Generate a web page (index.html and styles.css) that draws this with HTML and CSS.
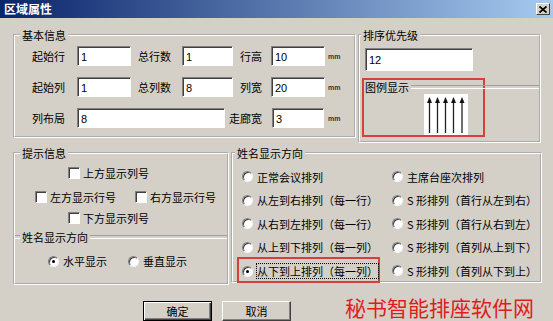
FILE: index.html
```html
<!DOCTYPE html>
<html lang="zh-CN">
<head>
    <meta charset="UTF-8">
    <title>区域属性</title>
    <link rel="stylesheet" href="styles.css">
</head>
<body>
    <div class="titlebar">
        <span class="title">区域属性</span>
        <span class="closeBtn">
            <svg width="8" height="7" viewBox="0 0 8 7"><path d="M0.5 0.5L7.5 6.5M7.5 0.5L0.5 6.5" stroke="#000" stroke-width="1.7"/></svg>
        </span>
    </div>
    <div class="dialog">
        <div class="topRow">
            <fieldset class="group basicGroup">
                <legend>基本信息</legend>
                <div class="basicGrid">
                    <label>起始行</label>
                    <input class="field w54" type="text" value="1">
                    <label>总行数</label>
                    <input class="field w51" type="text" value="1">
                    <label class="rightLabel">行高</label>
                    <input class="field w54" type="text" value="10">
                    <span class="unit">mm</span>

                    <label>起始列</label>
                    <input class="field w54" type="text" value="1">
                    <label>总列数</label>
                    <input class="field w51" type="text" value="8">
                    <label class="rightLabel">列宽</label>
                    <input class="field w54" type="text" value="20">
                    <span class="unit">mm</span>

                    <label>列布局</label>
                    <input class="field wide" type="text" value="8">
                    <label class="rightLabel">走廊宽</label>
                    <input class="field w52" type="text" value="3">
                    <span class="unit">mm</span>
                </div>
            </fieldset>
            <fieldset class="group sortGroup">
                <legend>排序优先级</legend>
                <input class="field sortField" type="text" value="12">
                <div class="legendBox">
                    <div class="legendHead">图例显示</div>
                    <svg class="arrows" width="44" height="41" viewBox="0 0 44 41">
                        <rect width="44" height="41" fill="#fff"/>
                        <g stroke="#222" stroke-width="1.3">
                            <path d="M5.5 7V39M13.5 7V39M21.5 7V39M29.5 7V39M38 7V39"/>
                        </g>
                        <g fill="#111">
                            <path d="M5.5 3L3 9H8Z"/>
                            <path d="M13.5 3L11 9H16Z"/>
                            <path d="M21.5 3L19 9H24Z"/>
                            <path d="M29.5 3L27 9H32Z"/>
                            <path d="M38 3L35.5 9H40.5Z"/>
                        </g>
                    </svg>
                </div>
            </fieldset>
        </div>

        <div class="midRow">
            <fieldset class="group hintGroup">
                <legend>提示信息</legend>
                <div class="checkRow rowA">
                    <span class="check"><span class="box"></span>上方显示列号</span>
                </div>
                <div class="checkRow rowB">
                    <span class="check"><span class="box"></span>左方显示行号</span>
                    <span class="check second"><span class="box"></span>右方显示行号</span>
                </div>
                <div class="checkRow rowC">
                    <span class="check"><span class="box"></span>下方显示列号</span>
                </div>
                <div class="sepTitle"><span>姓名显示方向</span></div>
                <div class="radioRow">
                    <span class="radio"><span class="dot checked"></span>水平显示</span>
                    <span class="radio second"><span class="dot"></span>垂直显示</span>
                </div>
            </fieldset>
            <fieldset class="group nameGroup">
                <legend>姓名显示方向</legend>
                <div class="radioGrid">
                    <span class="radio"><span class="dot"></span>正常会议排列</span>
                    <span class="radio"><span class="dot"></span>主席台座次排列</span>
                    <span class="radio"><span class="dot"></span>从左到右排列（每一行）</span>
                    <span class="radio"><span class="dot"></span>S 形排列（首行从左到右）</span>
                    <span class="radio"><span class="dot"></span>从右到左排列（每一行）</span>
                    <span class="radio"><span class="dot"></span>S 形排列（首行从右到左）</span>
                    <span class="radio"><span class="dot"></span>从上到下排列（每一列）</span>
                    <span class="radio"><span class="dot"></span>S 形排列（首列从上到下）</span>
                    <span class="radio marked"><span class="dot checked"></span><span class="focus">从下到上排列（每一列）</span></span>
                    <span class="radio"><span class="dot"></span>S 形排列（首列从下到上）</span>
                </div>
            </fieldset>
        </div>

        <div class="bottomRow">
            <button class="btn default">确定</button>
            <button class="btn">取消</button>
            <span class="watermark">秘书智能排座软件网</span>
        </div>
    </div>
</body>
</html>
```

FILE: styles.css
```css
*{
    margin: 0;
    padding: 0;
    box-sizing: border-box;
}
body{
    width: 553px;
    height: 321px;
    overflow: hidden;
    background-color: #d4d0c8;
    color: #000;
    font: 11px/14px "Noto Sans CJK SC", sans-serif;
}
.titlebar{
    height: 18px;
    display: flex;
    align-items: center;
    justify-content: space-between;
    padding: 0 3px 0 4px;
    background: linear-gradient(to right, #0a246a, #a6caf0);
}
.title{
    color: #fff;
    font-weight: bold;
    font-size: 12px;
}
.closeBtn{
    width: 14px;
    height: 12px;
    display: flex;
    align-items: center;
    justify-content: center;
    background-color: #d4d0c8;
    border: 1px solid;
    border-color: #fff #404040 #404040 #fff;
}
.dialog{
    padding: 10px 0 0 13px;
}

/* group boxes */
.group{
    border: 2px groove #fff;
    padding: 0;
}
.group legend{
    margin-left: 5px;
    padding: 0 2px;
    line-height: 14px;
}
.topRow, .midRow{
    display: flex;
    align-items: flex-start;
}
.basicGroup{
    width: 343px;
    height: 110px;
}
.sortGroup{
    width: 183px;
    height: 115px;
    margin-left: 2px;
}
.sortGroup legend{
    margin-left: 1px;
}
.midRow{
    margin-top: 3px;
}
.hintGroup{
    width: 216px;
    height: 139px;
}
.nameGroup{
    width: 311px;
    height: 137px;
    margin-left: 2px;
}
.nameGroup legend{
    margin-left: 2px;
}

/* basic info */
.basicGrid{
    display: grid;
    grid-template-columns: 45px 61px 44px 51px 38px 57px auto;
    grid-auto-rows: 20px;
    row-gap: 11px;
    align-items: center;
    padding: 4px 0 0 17px;
}
.basicGrid label{
    white-space: nowrap;
}
.rightLabel{
    justify-self: end;
    margin-right: 9px;
}
.field{
    height: 20px;
    background-color: #fff;
    border: 1px solid;
    border-color: #808080 #fff #fff #808080;
    box-shadow: inset 1px 1px 0 #404040;
    font: 11px/13px "Liberation Sans", sans-serif;
    padding: 1px 3px 0;
    outline: none;
}
.w54{ width: 54px; }
.w51{ width: 51px; }
.w52{ width: 52px; margin-left: 1px; }
.wide{
    width: 148px;
    grid-column: span 3;
}
.unit{
    font: bold 7px "Liberation Sans", sans-serif;
    color: #333;
}

/* sort priority */
.sortField{
    display: block;
    width: 108px;
    height: 23px;
    margin: 6px 0 0 5px;
}
.legendBox{
    width: 123px;
    height: 59px;
    margin: 7px 0 0 2px;
    border: 2px solid #d4403c;
}
.legendHead{
    display: flex;
    align-items: center;
    height: 14px;
    margin: 0 -56px 0 1px;
}
.legendHead::after{
    content: "";
    flex: 1;
    height: 2px;
    margin-left: 2px;
    border-top: 1px solid #a0a0a0;
    border-bottom: 1px solid #fff;
}
.arrows{
    display: block;
    margin-left: 60px;
}

/* hint info */
.checkRow{
    display: flex;
    align-items: center;
    height: 16px;
}
.rowA{ margin-top: 5px; padding-left: 53px; }
.rowB{ margin-top: 8px; padding-left: 20px; }
.rowC{ margin-top: 5px; padding-left: 53px; }
.check, .radio{
    display: flex;
    align-items: center;
    white-space: nowrap;
}
.check .box{
    width: 12px;
    height: 12px;
    margin-right: 3px;
    background-color: #fff;
    border: 1px solid;
    border-color: #808080 #fff #fff #808080;
    box-shadow: inset 1px 1px 0 #404040;
}
.check.second{
    margin-left: 19px;
}
.sepTitle{
    display: flex;
    align-items: center;
    height: 14px;
    margin-top: 4px;
}
.sepTitle::before, .sepTitle::after{
    content: "";
    height: 2px;
    border-top: 1px solid #a0a0a0;
    border-bottom: 1px solid #fff;
}
.sepTitle::before{ width: 5px; }
.sepTitle::after{ flex: 1; }
.sepTitle span{
    padding: 0 2px;
}
.radioRow{
    display: flex;
    align-items: center;
    height: 14px;
    margin-top: 10px;
    padding-left: 33px;
}
.radioRow .second{
    margin-left: 21px;
}
.dot{
    position: relative;
    width: 11px;
    height: 11px;
    margin-right: 4px;
    border-radius: 50%;
    background-color: #fff;
    border: 1px solid;
    border-color: #808080 #f4f4f4 #f4f4f4 #808080;
    box-shadow: inset 1px 1px 0 #404040;
}
.dot.checked::after{
    content: "";
    position: absolute;
    left: 3px;
    top: 3px;
    width: 3px;
    height: 3px;
    border-radius: 50%;
    background-color: #000;
}

/* name direction */
.radioGrid{
    display: grid;
    grid-template-columns: 150px 1fr;
    grid-auto-rows: 23.5px;
    align-items: center;
    padding: 5px 0 0 9px;
}
.radio.marked{
    align-self: start;
    width: 143px;
    height: 26px;
    margin: -2px 0 0 -5px;
    padding: 5px 0 3px 3px;
    border: 2px solid #d4403c;
}
.focus{
    outline: 1px dotted #000;
}

/* buttons */
.bottomRow{
    display: flex;
    align-items: center;
    margin-top: 10px;
    padding-left: 130px;
}
.btn{
    width: 69px;
    height: 20px;
    font: 11px/14px "Noto Sans CJK SC", sans-serif;
    background-color: #d4d0c8;
    border: 1px solid;
    border-color: #fff #404040 #404040 #fff;
    box-shadow: inset -1px -1px 0 #808080;
}
.btn.default{
    border-color: #000;
    box-shadow: inset 1px 1px 0 #fff, inset -1px -1px 0 #404040, inset -2px -2px 0 #808080;
}
.btn + .btn{
    margin-left: 10px;
}
.watermark{
    margin: 0 0 7px 54px;
    color: #e01c1c;
    font-size: 21px;
    line-height: 24px;
}
```
